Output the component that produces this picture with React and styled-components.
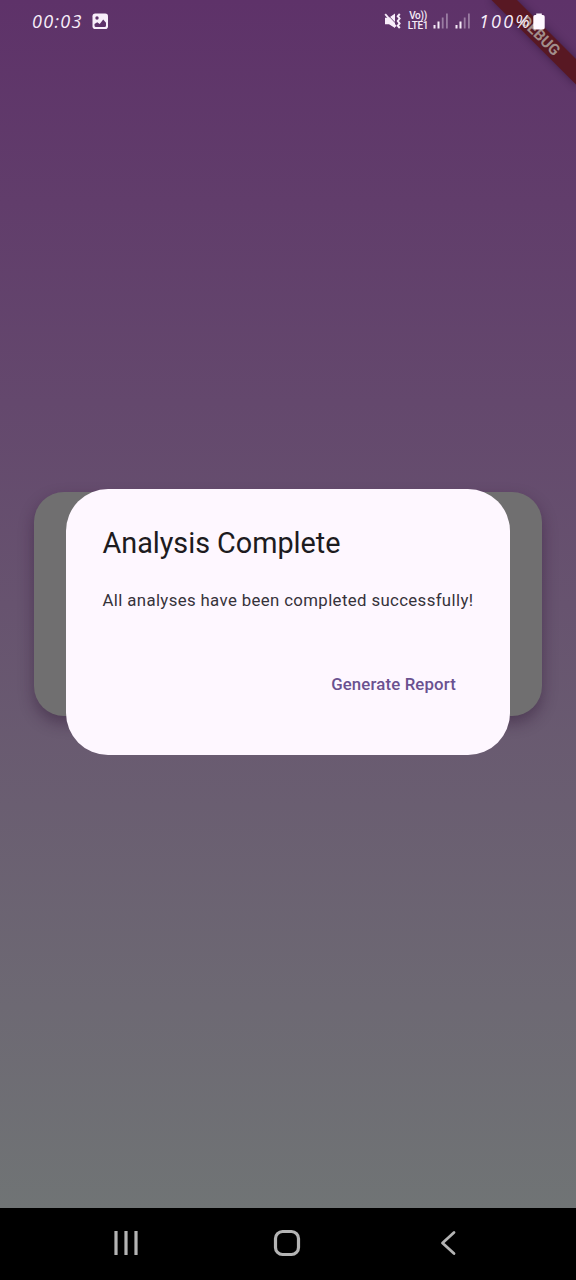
import React from "react";
import styled, { createGlobalStyle } from "styled-components";

const GlobalStyle = createGlobalStyle`
  body { margin: 0; background: #000; font-family: Roboto, sans-serif; }
  *, *::before, *::after { box-sizing: border-box; }
`;

const Phone = styled.div`
  position: relative;
  display: flex;
  flex-direction: column;
  width: 576px;
  height: 1280px;
  overflow: hidden;
`;

const Screen = styled.main`
  flex: 1;
  display: flex;
  flex-direction: column;
  background: linear-gradient(#5e3269, #707475);
`;

const StatusBar = styled.header`
  position: relative;
  z-index: 2;
  display: flex;
  align-items: center;
  justify-content: space-between;
  height: 42px;
  padding: 0 31px 0 32px;
`;

const StatusGroup = styled.div`
  display: flex;
  align-items: center;
`;

const StatusText = styled.span`
  width: ${(p) => p.$width}px;
  margin-right: ${(p) => p.$after}px;
  font: italic 500 18px/24px "Open Sans", sans-serif;
  letter-spacing: ${(p) => p.$spacing}px;
  white-space: nowrap;
  color: #f8eefa;
`;

const StatusIcon = styled.svg`
  display: block;
  flex: none;
  margin-right: ${(p) => p.$after || 0}px;
`;

const Network = styled.div`
  display: flex;
  flex-direction: column;
  align-items: center;
  width: 22px;
  margin-right: 4px;
  font: 500 10px/10px Roboto, sans-serif;
  letter-spacing: -0.3px;
  color: #f5ebf7;
`;

const Content = styled.section`
  margin-top: 450px;
  padding: 0 34.5px 0 34px;
`;

const Card = styled.div`
  height: 223.5px;
  border-radius: 30px;
  background: #706f70;
  box-shadow: 0 7px 15px rgba(40, 15, 45, 0.4);
`;

const DialogLayer = styled.div`
  position: absolute;
  inset: 0 0 36px;
  display: flex;
  align-items: center;
  justify-content: center;
`;

const Dialog = styled.div`
  display: flex;
  flex-direction: column;
  width: 444px;
  height: 266.5px;
  padding: 36px 37px 36px 36.5px;
  border-radius: 42px;
  background: #fef7ff;
`;

const Title = styled.h1`
  margin: 0;
  font-size: 28.8px;
  font-weight: 400;
  line-height: 36px;
  letter-spacing: -0.03px;
  white-space: nowrap;
  color: #1d1b20;
`;

const Message = styled.p`
  margin: 27px 0 0;
  font-size: 16.8px;
  line-height: 24px;
  letter-spacing: 0.37px;
  white-space: nowrap;
  color: #36323a;
`;

const Actions = styled.div`
  display: flex;
  justify-content: flex-end;
  margin-top: 42px;
`;

const TextButton = styled.button`
  height: 60px;
  padding: 0 17px 0 18px;
  border: 0;
  background: none;
  font: 500 16.8px/24px Roboto, sans-serif;
  letter-spacing: 0.15px;
  white-space: nowrap;
  color: #6a5190;
`;

const DebugBanner = styled.div`
  position: absolute;
  top: 29px;
  left: 478px;
  width: 120px;
  height: 18px;
  transform: rotate(45deg) translateY(-3px);
  background: #581823;
  box-shadow: 0 0 8px rgba(25, 5, 35, 0.45);
  font: 700 15.3px/18px Roboto, sans-serif;
  text-align: center;
  color: #a28e8b;
`;

const NavBar = styled.nav`
  flex: none;
  display: flex;
  align-items: center;
  justify-content: space-between;
  height: 72px;
  padding: 0 119px 2px 113px;
  background: #000;
`;

const NavIcon = styled.svg`
  display: block;
  fill: none;
  stroke: #b4b4b4;
  stroke-width: 3.2;
  stroke-linecap: round;
  stroke-linejoin: round;
`;

const HomeIcon = styled(NavIcon)`
  margin-right: 4px;
`;

const Signal = ({ after }) => (
  <StatusIcon $after={after} width="16" height="16" viewBox="0 0 16 16">
    <g fill="#f5ebf7">
      <rect x="0.5" y="12" width="2" height="3.5" />
      <rect x="4.5" y="8.5" width="2" height="7" />
      <rect x="8.8" y="4.5" width="1.8" height="11" opacity="0.4" />
      <rect x="13" y="0.5" width="1.8" height="15" opacity="0.4" />
    </g>
  </StatusIcon>
);

export default function App() {
  return (
    <>
      <GlobalStyle />
      <Phone>
        <Screen>
          <StatusBar>
            <StatusGroup>
              <StatusText $width={51} $after={9} $spacing={1.3}>00:03</StatusText>
              <StatusIcon width="16" height="16" viewBox="0 0 16 16">
                <rect x="0.5" y="0.5" width="15.5" height="15.5" rx="2.8" fill="#f8eefa" />
                <circle cx="5" cy="5" r="1.7" fill="#5e326a" />
                <path d="M2.5 12.5 V11 L5.2 9.2 L7.7 11 L11.2 6.5 L14 9.8 V12.5 Q14 14 12.5 14 H4 Q2.5 14 2.5 12.5Z" fill="#5e326a" />
              </StatusIcon>
            </StatusGroup>
            <StatusGroup>
              <StatusIcon $after={6} width="17" height="16" viewBox="0 0 17 16">
                <path d="M1 4.8 H5 L11 0.5 V15 L5 11.2 H1Z" fill="#f8eefa" />
                <path d="M2.2 0.3 L12.5 11" stroke="#5e326a" strokeWidth="0.9" />
                <path d="M1.2 1.2 L12 13.5" stroke="#f8eefa" strokeWidth="1.8" />
                <path d="M15.8 1 L13.8 3.2 L15.6 5.5 L13.8 8 L15.6 10.4 L13.8 12.7 L15.8 15" fill="none" stroke="#f8eefa" strokeWidth="2" />
              </StatusIcon>
              <Network><span>Vo))</span><span>LTE1</span></Network>
              <Signal after={6} />
              <Signal after={8} />
              <StatusText $width={52} $after={2} $spacing={2.2}>100%</StatusText>
              <StatusIcon width="12" height="17" viewBox="0 0 12 17">
                <path d="M3.2 0.5 H8.8 V2 H10 Q11.7 2 11.7 3.8 V14.8 Q11.7 16.5 10 16.5 H2 Q0.3 16.5 0.3 14.8 V3.8 Q0.3 2 2 2 H3.2Z" fill="#fff8ff" />
              </StatusIcon>
            </StatusGroup>
          </StatusBar>
          <Content><Card /></Content>
        </Screen>
        <NavBar>
          <NavIcon width="26" height="26" viewBox="0 0 26 26">
            <path d="M3 1 V25 M13 1 V25 M23 1 V25" strokeLinecap="butt" />
          </NavIcon>
          <HomeIcon width="28" height="28" viewBox="0 0 28 28">
            <rect x="2.5" y="2.5" width="23" height="23" rx="7" />
          </HomeIcon>
          <NavIcon width="18" height="26" viewBox="0 0 18 26">
            <path d="M15 2.5 L3.5 13 L15 23.5" strokeWidth="2.8" />
          </NavIcon>
        </NavBar>
        <DialogLayer>
          <Dialog role="dialog" aria-label="Analysis Complete">
            <Title>Analysis Complete</Title>
            <Message>All analyses have been completed successfully!</Message>
            <Actions><TextButton>Generate Report</TextButton></Actions>
          </Dialog>
        </DialogLayer>
        <DebugBanner>DEBUG</DebugBanner>
      </Phone>
    </>
  );
}
